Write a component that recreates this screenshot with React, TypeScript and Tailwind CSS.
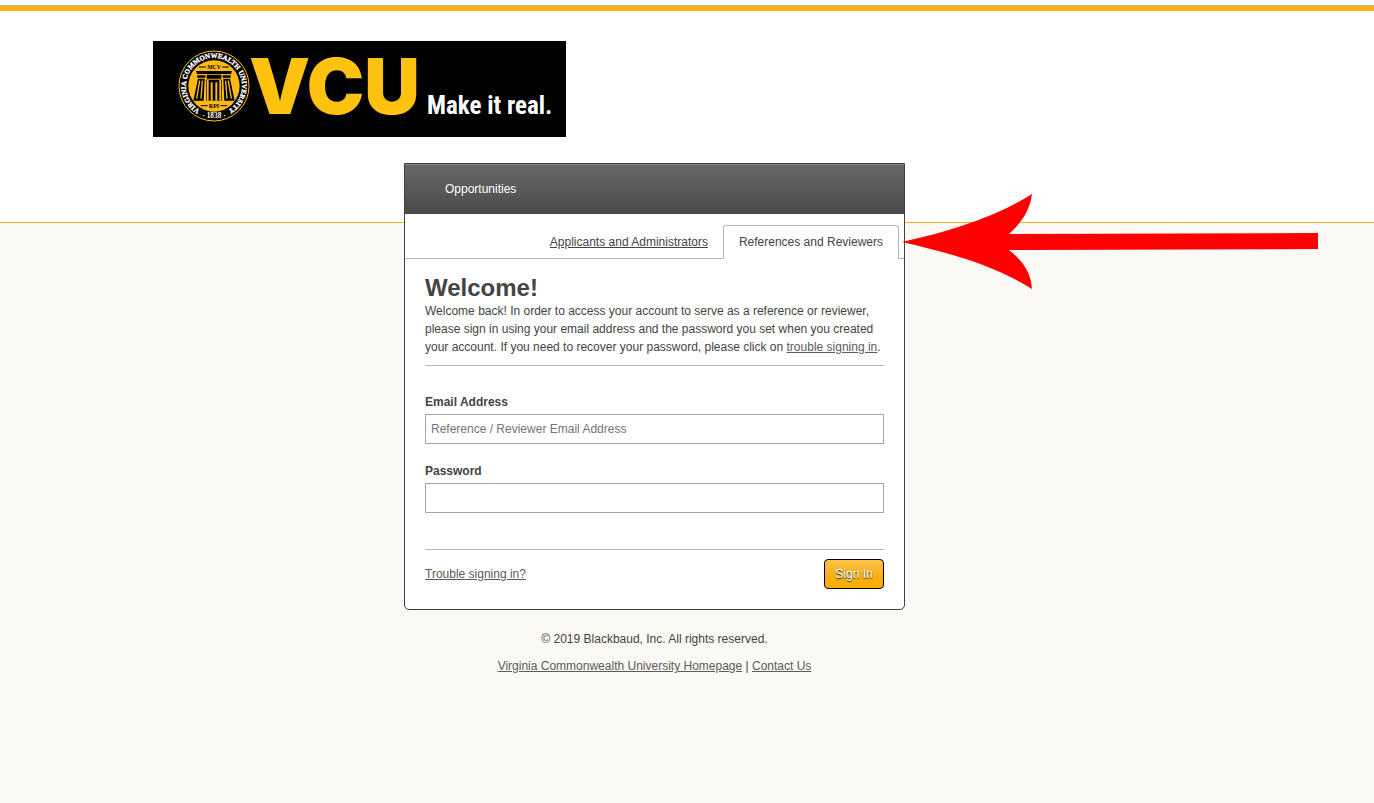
import { FormEvent, ReactNode, useState } from 'react'

interface TextFieldProps {
  id: string
  label: string
  type: string
  value: string
  placeholder?: string
  onChange: (value: string) => void
}

function TextField({ id, label, type, value, placeholder, onChange }: TextFieldProps) {
  return (
    <div>
      <label htmlFor={id} className="mb-[3px] block font-bold">
        {label}
      </label>
      <input
        id={id}
        type={type}
        value={value}
        placeholder={placeholder}
        onChange={e => onChange(e.target.value)}
        className="block h-[30px] w-full border border-[#a6a6a6] bg-white px-[5px] placeholder:text-[#757575]"
      />
    </div>
  )
}

function TextLink({ children }: { children: ReactNode }) {
  return (
    <a href="#" className="text-[#5b5b5b] underline">
      {children}
    </a>
  )
}

function Seal() {
  return (
    <svg viewBox="0 0 216 216" className="mt-[9px] h-[72px] w-[72px]" role="img" aria-label="University seal">
      <defs>
        <path id="ring" d="M 62 178 A 84 84 0 1 1 154 178" />
      </defs>
      <circle cx="108" cy="108" r="105" fill="#000" stroke="#ffc20e" strokeWidth="3" />
      <circle cx="108" cy="108" r="77" fill="#fdb913" />
      <g fontFamily="'Liberation Serif', serif" fontWeight="bold">
        <text fontSize="21" fill="#fff" stroke="#fff">
          <textPath href="#ring" startOffset="50%" textAnchor="middle">
            VIRGINIA COMMONWEALTH UNIVERSITY
          </textPath>
        </text>
        <text x="108" y="204" fontSize="22" textAnchor="middle" fill="#fff">
          · 1838 ·
        </text>
        <text x="108" y="57" fontSize="17" textAnchor="middle">
          MCV
        </text>
        <text x="108" y="173" fontSize="18" textAnchor="middle">
          RPI
        </text>
      </g>
      <path d="M63 51H84 M132 51H153 M68 167H89 M127 167H148" stroke="#000" strokeWidth="3" />
      {/* cornice and frieze */}
      <path d="M54 63H162L159 72H57Z M58 76H82V83H58Z M86 74H130V86H86Z M134 76H158V83H134Z" />
      {/* side pylons */}
      <path d="M60 86H80L77 152H46Z M136 86H156L170 152H139Z" />
      <path d="M65 92L56 146 M73 92L69 146 M151 92L160 146 M143 92L147 146" stroke="#fdb913" strokeWidth="4" />
      {/* doorway columns */}
      <path d="M84 89H132V152H84Z" />
      <path d="M89 89V152 M101 97V152 M115 97V152 M127 89V152" stroke="#fdb913" strokeWidth="6" />
    </svg>
  )
}

function Logo() {
  return (
    <div className="flex h-24 w-[413px] items-start bg-black pl-[25px]">
      <Seal />
      <svg viewBox="0 0 310 96" className="h-24 w-[310px]" role="img" aria-label="VCU Make it real.">
        <text x="-1" y="73" fontFamily="Inter, sans-serif" fontWeight="900" fontSize="77" fill="#ffc20e">
          VCU
        </text>
        <text
          x="177"
          y="73"
          fontFamily="'Liberation Sans Narrow', 'Roboto Condensed', 'Open Sans Condensed', Roboto, sans-serif"
          fontWeight="bold"
          fontSize="25"
          fill="#fff"
        >
          Make it real.
        </text>
      </svg>
    </div>
  )
}

function Arrow() {
  return (
    <svg
      viewBox="0 0 416 96"
      className="pointer-events-none absolute top-[30px] left-full -ml-[2px] h-24 w-[416px]"
      aria-hidden="true"
    >
      <path
        d="M0 48C48 37 92 24 130 0C128 16 120 28 107 40L416 39V55L107 56C120 66 129 78 130 95C92 71 48 59 0 48Z"
        fill="#f00"
      />
    </svg>
  )
}

export default function App() {
  const [email, setEmail] = useState('')
  const [password, setPassword] = useState('')

  const handleSubmit = (e: FormEvent) => {
    e.preventDefault()
  }

  return (
    <div className="min-h-screen overflow-x-hidden bg-[#faf9f4] font-['Liberation_Sans',Arial,sans-serif] text-[12px] leading-[18px] text-[#444]">
      <header className="border-b border-[#fbb215] bg-white pt-[5px]">
        <div className="h-[6px] border-t border-[#b8b8b0] bg-[#fbb215]" />
        <div className="pt-[30px] pr-[65px] pb-[85px]">
          <div className="mx-auto max-w-[1003px]">
            <Logo />
          </div>
        </div>
      </header>

      <div className="-mt-[60px] pr-[65px]">
        <main className="relative mx-auto max-w-[501px] rounded-b-[5px] border border-[#3f3f3f] bg-white">
          <nav className="flex h-[50px] items-center border-t border-[#8a8a8a] bg-linear-to-b from-[#686868] to-[#4a4a4a] pb-[2px] pl-10">
            <a href="#" className="text-white">
              Opportunities
            </a>
          </nav>

          <div className="flex h-[45px] items-end justify-end border-b border-[#b5b5b5] pr-[5px]">
            <a href="#" className="px-[15px] pt-[7px] pb-[7px] underline">
              Applicants and Administrators
            </a>
            <a
              href="#"
              aria-current="page"
              className="-mb-px rounded-t-[3px] border border-b-0 border-[#b5b5b5] bg-white px-[15px] pt-[7px] pb-2"
            >
              References and Reviewers
            </a>
          </div>

          <form onSubmit={handleSubmit} className="px-5 pt-[15px] pb-5">
            <h1 className="text-[24px] leading-[28px] font-bold">Welcome!</h1>
            <p className="border-b border-[#b5b5b5] pb-[9px]">
              Welcome back! In order to access your account to serve as a reference or reviewer, please sign in using
              your email address and the password you set when you created your account. If you need to recover your
              password, please click on <TextLink>trouble signing in</TextLink>.
            </p>

            <div className="mt-[27px] flex flex-col gap-[18px]">
              <TextField
                id="email"
                label="Email Address"
                type="email"
                placeholder="Reference / Reviewer Email Address"
                value={email}
                onChange={setEmail}
              />
              <TextField id="password" label="Password" type="password" value={password} onChange={setPassword} />
            </div>

            <div className="mt-9 flex items-center justify-between border-t border-[#b5b5b5] pt-[9px]">
              <TextLink>Trouble signing in?</TextLink>
              <button
                type="submit"
                className="h-[30px] w-[60px] rounded-[4px] border border-black bg-linear-to-b from-[#fcc244] to-[#f9ae0b] to-60% text-white [text-shadow:0_1px_1px_#222]"
              >
                Sign In
              </button>
            </div>
          </form>

          <Arrow />
        </main>

        <footer className="mt-5 flex flex-col gap-[9px] pb-5 text-center">
          <p>© 2019 Blackbaud, Inc. All rights reserved.</p>
          <p>
            <TextLink>Virginia Commonwealth University Homepage</TextLink> | <TextLink>Contact Us</TextLink>
          </p>
        </footer>
      </div>
    </div>
  )
}
